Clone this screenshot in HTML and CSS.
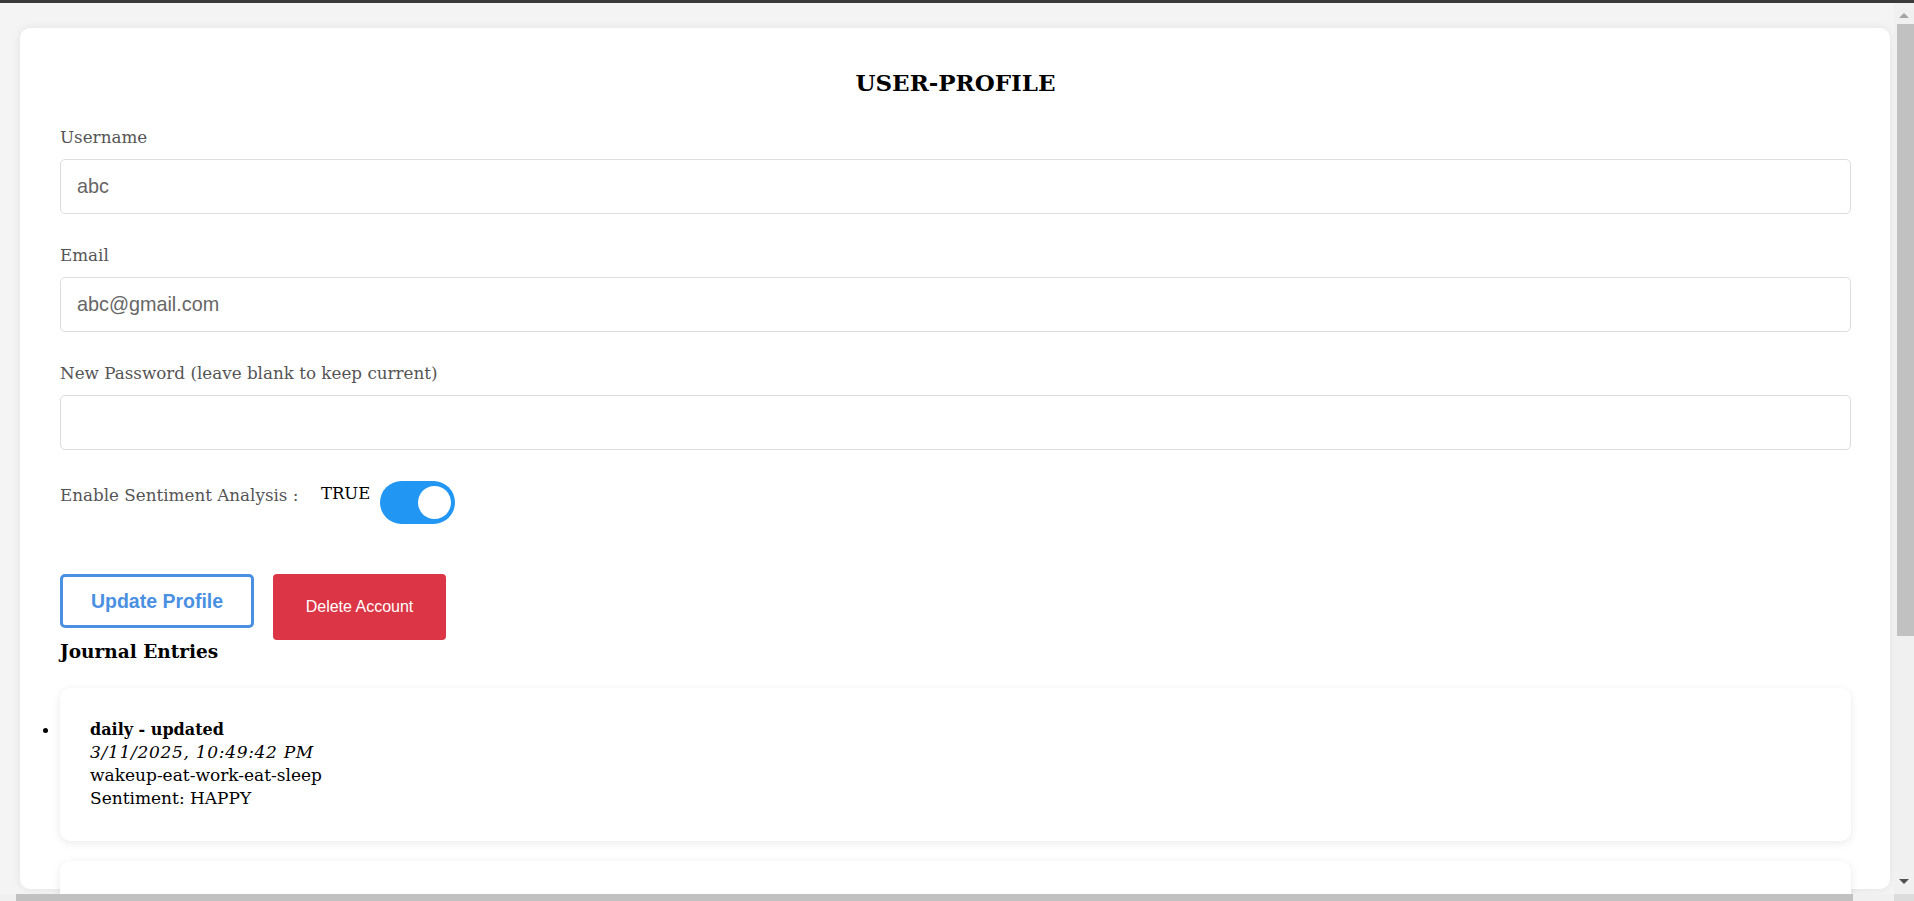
FILE: index.html
```html
<!DOCTYPE html>
<html lang="en">
<head>
<meta charset="utf-8">
<title>User Profile</title>
<link rel="stylesheet" href="styles.css">
</head>
<body>
<div class="topbar"></div>
<div class="page">
  <div class="card">
    <h1 class="title">USER-PROFILE</h1>
    <div class="field">
      <label class="label">Username</label>
      <div class="input">abc</div>
    </div>
    <div class="field">
      <label class="label">Email</label>
      <div class="input">abc@gmail.com</div>
    </div>
    <div class="field">
      <label class="label">New Password (leave blank to keep current)</label>
      <div class="input"></div>
    </div>
    <div class="toggle-row">
      <span class="label toggle-label">Enable Sentiment Analysis :</span>
      <span class="toggle-value">TRUE</span>
      <span class="switch"><span class="knob"></span></span>
    </div>
    <div class="actions">
      <button class="btn-update">Update Profile</button>
      <button class="btn-delete">Delete Account</button>
    </div>
    <h3 class="journal-title">Journal Entries</h3>
    <ul class="entries">
      <li class="entry">
        <div class="entry-title">daily - updated</div>
        <div class="entry-date">3/11/2025, 10:49:42 PM</div>
        <div class="entry-text">wakeup-eat-work-eat-sleep</div>
        <div class="entry-text">Sentiment: HAPPY</div>
      </li>
      <li class="entry">
        <div class="entry-title">final Check Update Test</div>
        <div class="entry-date">3/11/2025, 10:50:12 PM</div>
        <div class="entry-text">checking</div>
        <div class="entry-text">Sentiment: NEUTRAL</div>
      </li>
    </ul>
  </div>
</div>
<div class="vscroll">
  <div class="arrow-up"></div>
  <div class="vthumb"></div>
  <div class="arrow-down"></div>
</div>
<div class="hscroll"><div class="hthumb"></div></div>
<div class="corner"></div>
</body>
</html>
```
FILE: styles.css
```css
html, body {
  margin: 0;
  padding: 0;
  height: 901px;
  overflow: hidden;
}
body {
  background: #f4f4f4;
  font-family: "DejaVu Serif", serif;
  position: relative;
}
.topbar {
  height: 3px;
  background: #3a3a3a;
}
.page {
  padding: 25px 0 0 20px;
}
.card {
  width: 1870px;
  height: 861px;
  box-sizing: border-box;
  background: #fff;
  border-radius: 10px;
  box-shadow: 0 0 10px rgba(0, 0, 0, 0.08);
  padding: 40px 39px 0 40px;
}
.title {
  margin: 0 0 29px;
  text-align: center;
  font-size: 23px;
  line-height: 30px;
  font-weight: bold;
  color: #000;
}
.field {
  margin-bottom: 31px;
}
.label {
  display: block;
  font-size: 16.75px;
  line-height: 20px;
  color: #555;
  margin-bottom: 12px;
}
.input {
  height: 55px;
  box-sizing: border-box;
  border: 1px solid #ddd;
  border-radius: 5px;
  padding: 0 16px;
  display: flex;
  align-items: center;
  font-family: "Liberation Sans", Arial, sans-serif;
  font-size: 19.8px;
  color: #666;
}
.toggle-row {
  display: flex;
  align-items: flex-start;
  margin-top: 28px;
  height: 43px;
}
.toggle-label {
  margin: 4px 22.5px 0 0;
}
.toggle-value {
  font-size: 16.5px;
  line-height: 20px;
  margin-top: 3px;
  color: #000;
}
.switch {
  margin-left: 10px;
  width: 75px;
  height: 43px;
  box-sizing: border-box;
  border-radius: 22px;
  background: #2196f3;
  display: flex;
  justify-content: flex-end;
  align-items: center;
  padding-right: 4px;
}
.knob {
  width: 33px;
  height: 33px;
  border-radius: 50%;
  background: #fff;
}
.actions {
  display: flex;
  align-items: flex-start;
  gap: 19px;
  margin-top: 50px;
}
.btn-update {
  font-family: "Liberation Sans", Arial, sans-serif;
  font-weight: bold;
  font-size: 19.5px;
  line-height: 22px;
  color: #4a90e2;
  background: #fff;
  border: 3px solid #4a90e2;
  border-radius: 5px;
  padding: 0;
  white-space: nowrap;
  width: 194px;
  height: 54px;
  box-sizing: border-box;
}
.btn-delete {
  font-family: "Liberation Sans", Arial, sans-serif;
  font-size: 16px;
  line-height: 18px;
  color: #fff;
  background: #dc3545;
  border: none;
  border-radius: 4px;
  width: 173px;
  height: 66px;
  padding: 0;
  white-space: nowrap;
}
.journal-title {
  margin: 0;
  font-size: 18.5px;
  line-height: 24px;
  font-weight: bold;
  color: #000;
}
.entries {
  margin: 24px 0 0;
  padding: 0;
  list-style: disc outside;
}
.entry {
  background: #fff;
  border-radius: 10px;
  box-shadow: 0 2px 8px rgba(0, 0, 0, 0.09);
  padding: 30px 30px 31px 30px;
  margin-bottom: 20px;
  font-size: 17px;
  line-height: 23px;
  color: #000;
}
.entry-title {
  font-weight: bold;
  font-size: 16px;
}
.entry-date {
  font-style: italic;
  letter-spacing: 0.7px;
}
.vscroll {
  position: absolute;
  top: 3px;
  right: 0;
  width: 20px;
  height: 891px;
  background: #f0f0f0;
  display: flex;
  flex-direction: column;
  align-items: center;
}
.arrow-up {
  margin-top: 10px;
  width: 0;
  height: 0;
  border-left: 5px solid transparent;
  border-right: 5px solid transparent;
  border-bottom: 5px solid #a3a3a3;
}
.vthumb {
  margin-top: 6px;
  width: 17px;
  height: 612px;
  background: #c1c1c1;
  align-self: flex-end;
}
.arrow-down {
  margin-top: auto;
  margin-bottom: 10px;
  width: 0;
  height: 0;
  border-left: 5px solid transparent;
  border-right: 5px solid transparent;
  border-top: 5px solid #505050;
}
.hscroll {
  position: absolute;
  left: 0;
  bottom: 0;
  width: 1894px;
  height: 7px;
  background: #f0f0f0;
}
.hthumb {
  margin-left: 16px;
  width: 1837px;
  height: 7px;
  background: #c1c1c1;
}
.corner {
  position: absolute;
  right: 0;
  bottom: 0;
  width: 20px;
  height: 7px;
  background: #dcdcdc;
}
```
